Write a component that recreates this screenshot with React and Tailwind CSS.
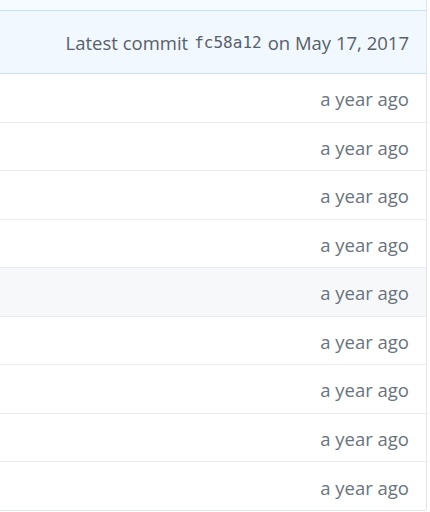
import React from "react";

const rows = Array.from({ length: 9 }, (_, i) => ({ id: i, age: "a year ago", hover: i === 4 }));

export default function App() {
  return (
    <div className="w-[430px] h-[512px] bg-white overflow-hidden" style={{ fontFamily: '"Open Sans", "Noto Sans", sans-serif' }}>
      <div className="w-[427px] border-r border-b border-[#e1e4e8] rounded-br-[3px] overflow-hidden h-[511px]">
        {/* top strip */}
        <div className="h-[11px] bg-[#f6fbff] border-b border-[#c8e1ff]"></div>

        {/* commit tease */}
        <div className="h-[63px] bg-[#f1f8ff] border-b border-[#c8e1ff] flex items-center justify-end pt-[2px] pr-[17px] text-[18.5px] text-[#586069]">
          <span>Latest commit</span>
          <span className="ml-[6px] mr-[6px] text-[16px]" style={{ fontFamily: '"DejaVu Sans Mono", monospace' }}>fc58a12</span>
          <span>on May 17, 2017</span>
        </div>

        {/* file rows */}
        {rows.map((r) => (
          <div
            key={r.id}
            className={`h-[48.5px] border-b border-[#eaecef] last:border-b-0 flex items-center justify-end pt-[3px] pr-[17px] text-[18.5px] text-[#6a737d] ${
              r.hover ? "bg-[#f6f8fa]" : "bg-white"
            }`}
          >
            {r.age}
          </div>
        ))}
      </div>
    </div>
  );
}
